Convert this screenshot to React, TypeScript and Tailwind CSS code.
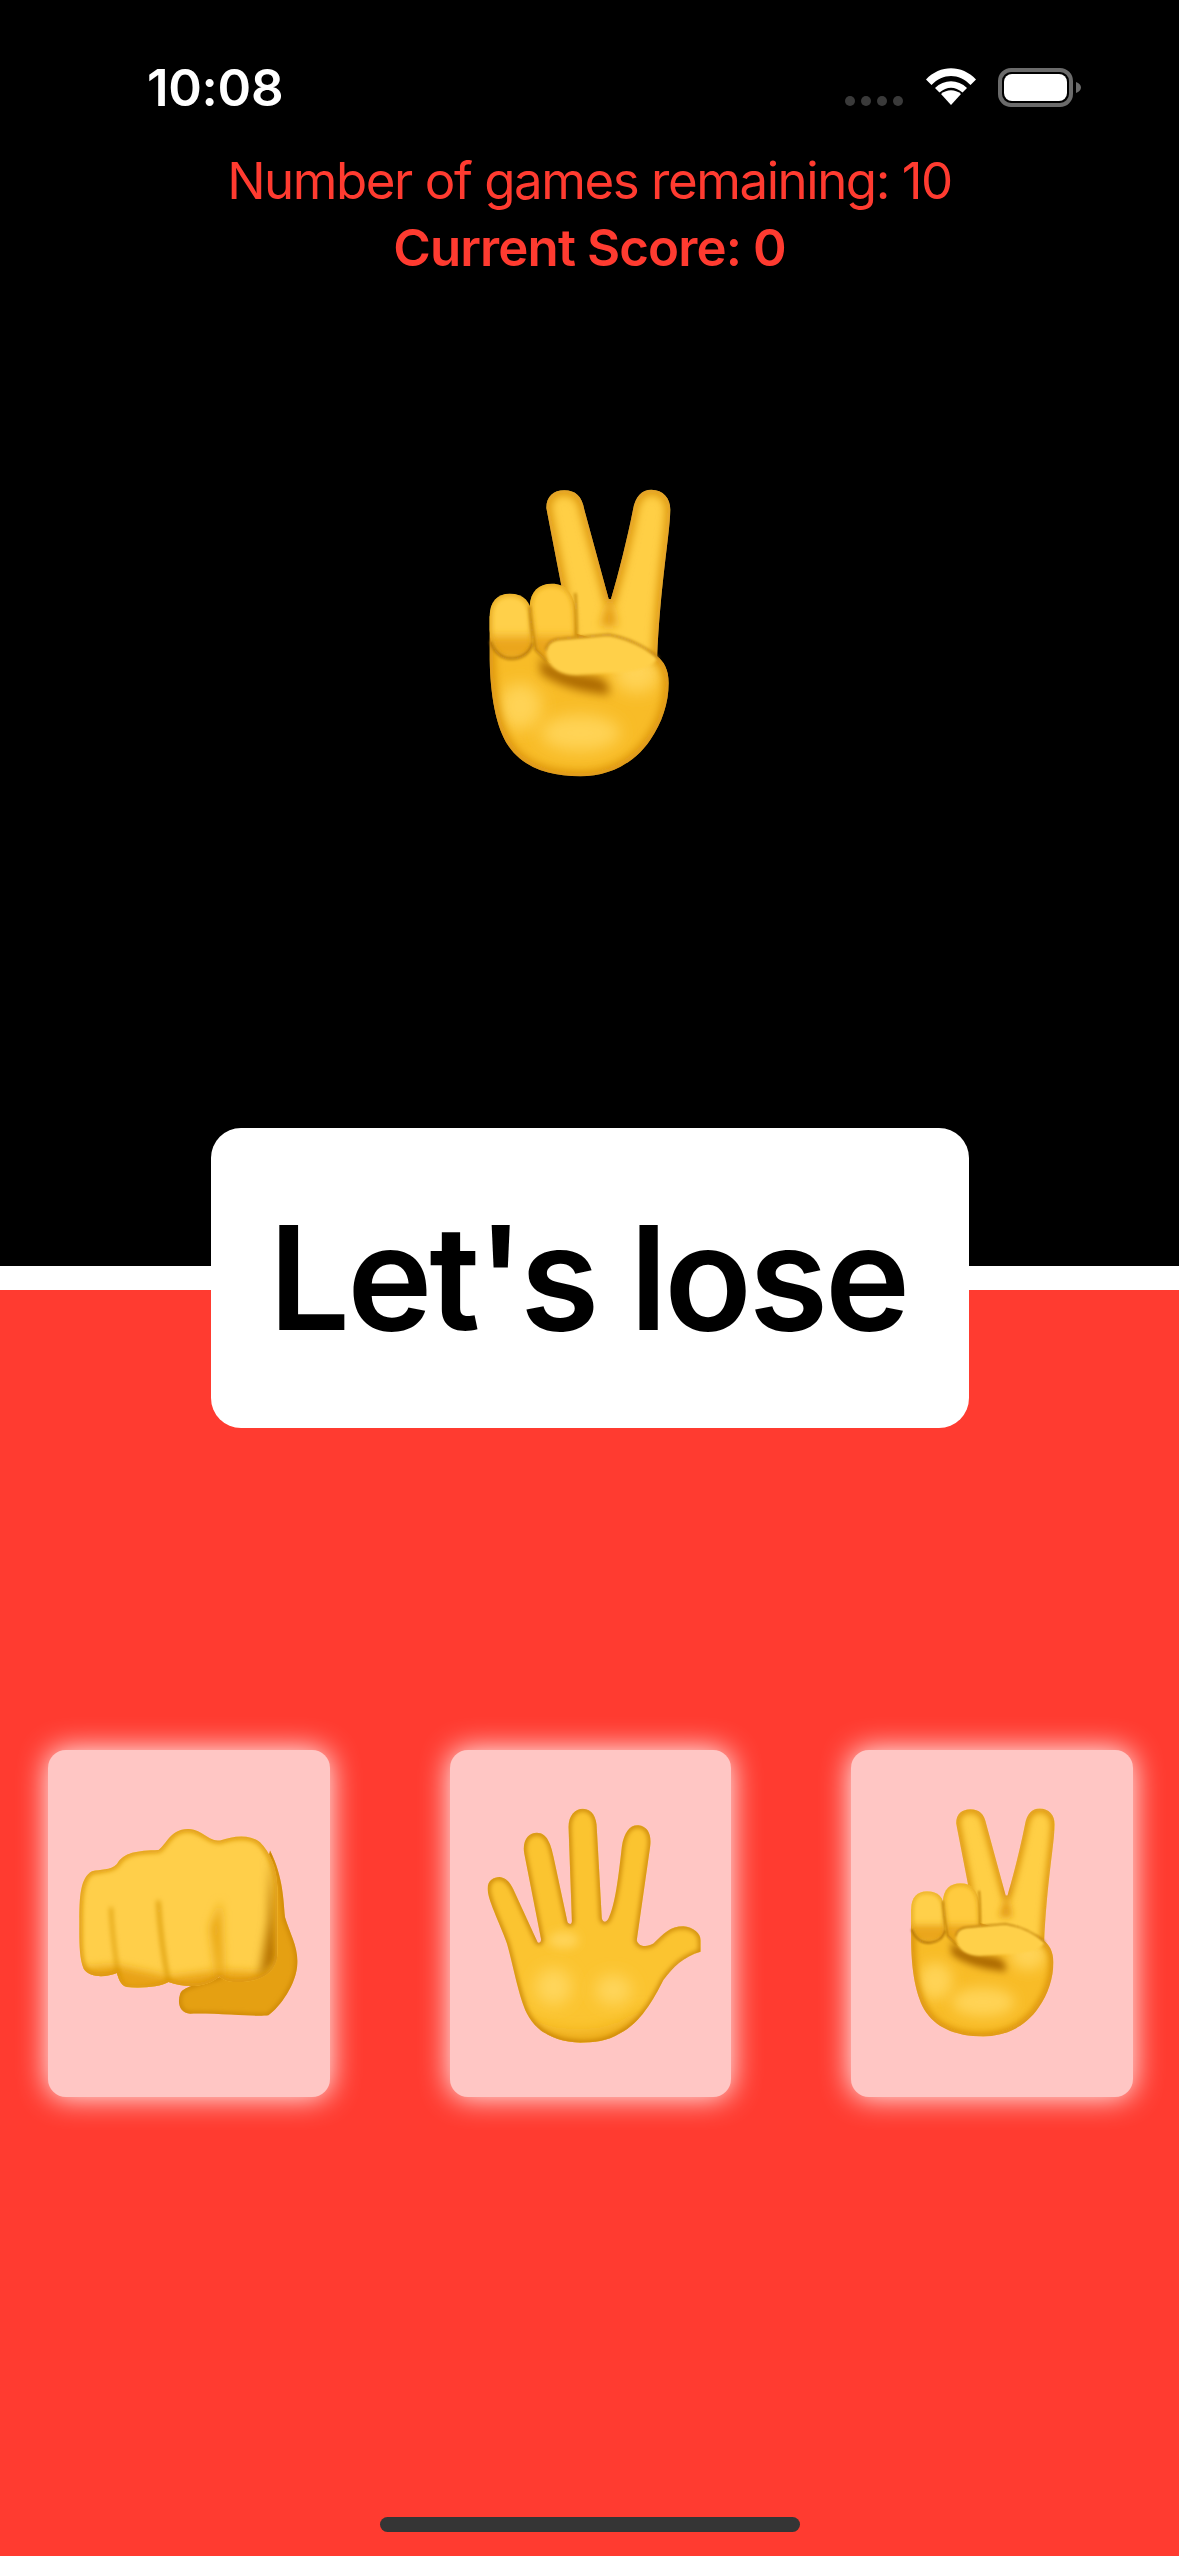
import type { ReactNode } from "react";

const SKIN = "#FCC431";
const EDGE = "#D58A08";

// Shared blur filters, one set per svg since ids are global to the page
function Blurs({ id }: { id: string }) {
  return (
    <defs>
      {[4, 8, 14, 24].map((s) => (
        <filter key={s} id={`${id}-b${s}`} filterUnits="userSpaceOnUse" x="0" y="0" width="1100" height="1300">
          <feGaussianBlur stdDeviation={s} />
        </filter>
      ))}
    </defs>
  );
}

// A filled shape with a soft darker rim, clipped to itself
function Soft({
  id,
  d,
  fill = SKIN,
  edge = EDGE,
  w = 16,
  blur = 8,
  children,
}: {
  id: string;
  d: string;
  fill?: string;
  edge?: string;
  w?: number;
  blur?: number;
  children?: ReactNode;
}) {
  const root = id.split("-")[0];
  return (
    <g>
      <clipPath id={`${id}-clip`}>
        <path d={d} />
      </clipPath>
      <path d={d} fill={fill} />
      <g clipPath={`url(#${id}-clip)`}>
        {children}
        <path d={d} fill="none" stroke={edge} strokeWidth={w} filter={`url(#${root}-b${blur})`} />
      </g>
    </g>
  );
}

function PeaceHand({ id, className }: { id: string; className: string }) {
  const f = (s: number) => `url(#${id}-b${s})`;
  return (
    <svg viewBox="140 85 555 870" className={className}>
      <Blurs id={id} />
      {/* two raised fingers */}
      <Soft
        id={`${id}-v`}
        d="M318 145 C318 110 340 92 372 92 C405 92 425 110 432 150 L505 418 L512 418 C535 340 560 240 578 150 C585 110 605 90 633 90 C668 90 690 115 690 150 C688 230 660 370 650 600 L400 600 L362 372 Z"
        w={24}
        blur={14}
        fill="#FFCF45"
      >
        <path d="M505 418 L512 418 L530 500 L480 500 Z" fill="#E29A12" filter={f(14)} />
      </Soft>
      {/* palm */}
      <Soft
        id={`${id}-p`}
        d="M148 470 L148 600 C150 700 165 800 205 860 C250 925 330 950 420 950 C500 950 580 915 630 840 C665 790 685 730 685 670 C685 630 670 605 650 590 L400 520 Z"
        w={26}
        blur={14}
        fill="#F8BC27"
      >
        <ellipse cx="240" cy="740" rx="65" ry="70" fill="#FFD355" filter={f(24)} />
        <ellipse cx="420" cy="820" rx="120" ry="55" fill="#FFD355" filter={f(24)} />
        <ellipse cx="590" cy="640" rx="70" ry="60" fill="#FFD355" filter={f(24)} />
        <path d="M300 590 C360 650 430 640 480 655 C500 665 508 680 506 705 C450 700 370 690 300 640 Z" fill="#AD6A05" filter={f(14)} />
      </Soft>
      {/* ring finger */}
      <Soft
        id={`${id}-r`}
        d="M268 440 C270 395 295 372 335 372 C375 372 400 400 405 450 L410 560 L330 610 L285 570 Z"
        fill="#FFCB3F"
        edge="#E0A018"
        w={12}
      >
        <rect x="268" y="530" width="150" height="80" fill="#EBA61C" filter={f(14)} />
      </Soft>
      {/* little finger */}
      <Soft
        id={`${id}-l`}
        d="M148 470 C148 425 172 402 208 402 C250 402 272 425 274 470 L277 550 C270 580 245 597 210 597 C175 595 152 565 148 510 Z"
        fill="#FFD04A"
        edge="#E0A018"
        w={12}
      >
        <rect x="140" y="530" width="150" height="70" fill="#EBA61C" filter={f(14)} />
      </Soft>
      <path d="M150 545 C165 585 190 597 212 597 C245 597 270 580 277 550" fill="none" stroke="#A96A08" strokeWidth="6" filter={f(4)} />
      <path d="M268 440 C270 480 275 520 285 570 L320 605" fill="none" stroke="#B97A08" strokeWidth="6" filter={f(4)} />
      <path d="M405 400 C408 450 410 490 408 530" fill="none" stroke="#BC7C08" strokeWidth="6" filter={f(4)} />
      {/* thumb, blends into the palm at its right side */}
      <path
        d="M318 572 C320 548 338 538 365 537 L505 525 C565 535 620 565 650 595 C640 630 560 640 500 640 L420 645 C380 650 345 635 330 612 C322 598 318 585 318 572 Z"
        fill="#FFD04A"
        filter={f(4)}
      />
      <path
        d="M316 572 C320 548 338 538 365 537 L505 525 C565 535 620 565 655 595"
        fill="none"
        stroke="#B5740A"
        strokeWidth="5"
        filter={f(4)}
      />
    </svg>
  );
}

function Fist({ className }: { className: string }) {
  const id = "fist";
  const f = (s: number) => `url(#${id}-b${s})`;
  return (
    <svg viewBox="170 320 670 575" className={className}>
      <Blurs id={id} />
      <Soft
        id="fist-back"
        d="M750 390 C790 470 790 540 795 590 C810 640 835 680 832 730 C830 790 780 860 745 885 C700 890 600 878 510 880 C480 878 470 850 480 820 C490 800 520 795 600 770 L700 600 Z"
        fill="#E5A012"
        edge="#C47E06"
        w={10}
        blur={8}
      />
      <Soft
        id="fist-f"
        d="M177 600 C177 530 180 470 215 452 C240 445 270 450 290 430 C310 395 350 390 415 388 C440 370 450 325 505 325 C550 328 560 360 600 360 C640 345 690 340 720 365 C750 395 770 440 772 500 L772 700 C770 760 720 785 650 785 C620 785 605 775 598 768 C560 800 500 805 445 785 C420 800 360 805 320 800 C300 795 295 775 290 758 C260 770 210 775 190 745 C175 710 177 650 177 600 Z"
        fill="#FFCF4A"
        edge="#DC960C"
        w={16}
        blur={8}
      >
        <path d="M170 745 L290 735 L450 770 L600 750 L780 760 L780 810 L170 810 Z" fill="#E8A214" filter={f(14)} />
        <path d="M272 560 C275 640 285 700 294 770" fill="none" stroke="#D8960E" strokeWidth="8" filter={f(8)} />
        <path d="M414 540 C420 640 432 720 446 790" fill="none" stroke="#D8960E" strokeWidth="10" filter={f(8)} />
        <path d="M570 620 L590 770 L610 770 L602 540 Z" fill="#E8A616" filter={f(14)} />
        <path d="M752 400 L778 720 L715 785 L745 600 Z" fill="#B87406" filter={f(14)} />
      </Soft>
    </svg>
  );
}

function OpenHand({ className }: { className: string }) {
  const id = "hand";
  const f = (s: number) => `url(#${id}-b${s})`;
  return (
    <svg viewBox="165 260 650 715" className={className}>
      <Blurs id={id} />
      <Soft
        id="hand-s"
        d="M172 505 C172 480 190 470 208 470 C232 472 245 495 255 520 L322 666 C332 672 334 660 331 650 L282 400 C275 360 295 337 320 337 C350 337 362 370 370 410 L412 606 C420 616 426 610 425 600 L415 320 C415 285 435 265 458 265 C485 265 500 290 500 325 L515 595 C520 610 530 605 535 595 C552 560 562 500 575 380 C582 335 600 313 625 315 C655 318 665 345 660 380 L620 660 C625 680 650 682 670 670 C700 640 720 618 760 618 C790 620 812 640 812 660 L812 695 C760 710 730 740 700 780 C670 840 630 910 570 940 C530 965 490 968 450 968 C380 965 320 940 290 880 C265 830 250 740 230 670 C205 600 172 540 172 505 Z"
        fill="#FBC430"
        edge="#C27C08"
        w={12}
        blur={8}
      >
        <path d="M272 890 C340 960 560 970 640 870 L660 990 L250 990 Z" fill="#E8A415" filter={f(24)} />
        <ellipse cx="370" cy="800" rx="55" ry="55" fill="#FFD65C" filter={f(24)} />
        <ellipse cx="550" cy="810" rx="55" ry="45" fill="#FFD65C" filter={f(24)} />
        <ellipse cx="400" cy="660" rx="45" ry="25" fill="#FFD458" filter={f(14)} />
      </Soft>
    </svg>
  );
}

function ChoiceCard({ children }: { children: ReactNode }) {
  return (
    <div className="flex h-[347px] w-[281.5px] shrink-0 items-start rounded-[18px] bg-[#FFC6C4] shadow-[0_0_30px_#ffffff]">
      {children}
    </div>
  );
}

export default function App() {
  return (
    <div className="relative flex h-[2556px] w-[1179px] flex-col overflow-hidden bg-black font-['Inter','Liberation_Sans',sans-serif]">
      {/* upper half */}
      <div className="flex h-[1266px] shrink-0 flex-col bg-black">
        <div className="flex h-[147px] shrink-0 items-start justify-between pl-[147px] pr-[98px] pt-[57px]">
          <span className="text-[51px] font-semibold leading-[62px] tracking-[-0.3px] text-white">10:08</span>
          <div className="flex items-start pt-[11px]">
            <div className="mt-[28px] flex gap-[6px]">
              <span className="h-[10px] w-[10px] rounded-full bg-[#3a3a3a]" />
              <span className="h-[10px] w-[10px] rounded-full bg-[#3a3a3a]" />
              <span className="h-[10px] w-[10px] rounded-full bg-[#3a3a3a]" />
              <span className="h-[10px] w-[10px] rounded-full bg-[#3a3a3a]" />
            </div>
            <svg viewBox="0 0 50 37" className="ml-[23px] h-[37px] w-[50px]">
              <path d="M25 37 L15 26 C21 21 29 21 35 26 Z" fill="#fff" />
              <path d="M9 20 C18 11 32 11 41 20 L36.5 24.5 C29 18 21 18 13.5 24.5 Z" fill="#fff" />
              <path d="M0 11.5 C14 -3.5 36 -3.5 50 11.5 L44.5 17 C33 5 17 5 5.5 17 Z" fill="#fff" />
            </svg>
            <div className="ml-[22px] flex h-[39px] w-[75px] items-center justify-center rounded-[13px] border-[4px] border-[#6b6b6b]">
              <div className="h-[27px] w-[63px] rounded-[8px] bg-white" />
            </div>
            <svg viewBox="0 0 5 11" className="ml-[3px] mt-[14px] h-[11px] w-[5px]">
              <path d="M0 0 C3 1 5 3 5 5.5 C5 8 3 10 0 11 Z" fill="#6b6b6b" />
            </svg>
          </div>
        </div>
        <p className="text-center text-[51px] leading-[67px] tracking-[-1.45px] text-[#FF3B30]">Number of games remaining: 10</p>
        <p className="text-center text-[51px] font-semibold leading-[67px] tracking-[-0.9px] text-[#FF3B30]">Current Score: 0</p>
        <PeaceHand id="big" className="ml-[487px] mt-[207px] h-[290px] w-[185px] shrink-0 blur-[0.7px]" />
      </div>

      <div className="h-[24px] shrink-0 bg-white" />

      {/* lower half */}
      <div className="flex flex-1 flex-col bg-[#FF3B30]">
        <div className="ml-[48px] mt-[460px] flex gap-[120px]">
          <ChoiceCard>
            <Fist className="ml-[29px] mt-[77px] h-[192px] w-[223px] shrink-0 blur-[0.7px]" />
          </ChoiceCard>
          <ChoiceCard>
            <OpenHand className="ml-[35px] mt-[57px] h-[238px] w-[217px] shrink-0 blur-[0.7px]" />
          </ChoiceCard>
          <ChoiceCard>
            <PeaceHand id="small" className="ml-[58px] mt-[57px] h-[231px] w-[147px] shrink-0 blur-[0.7px]" />
          </ChoiceCard>
        </div>
        <div className="ml-[380px] mt-[420px] h-[15px] w-[420px] rounded-full bg-[#353535]" />
      </div>

      {/* play button sits across the divider */}
      <div className="absolute left-[211px] top-[1128px] flex h-[300px] w-[758px] items-center justify-center rounded-[30px] bg-white">
        <span className="-ml-[4px] text-[144px] font-semibold leading-none tracking-[-3px] text-black">Let's lose</span>
      </div>
    </div>
  );
}
